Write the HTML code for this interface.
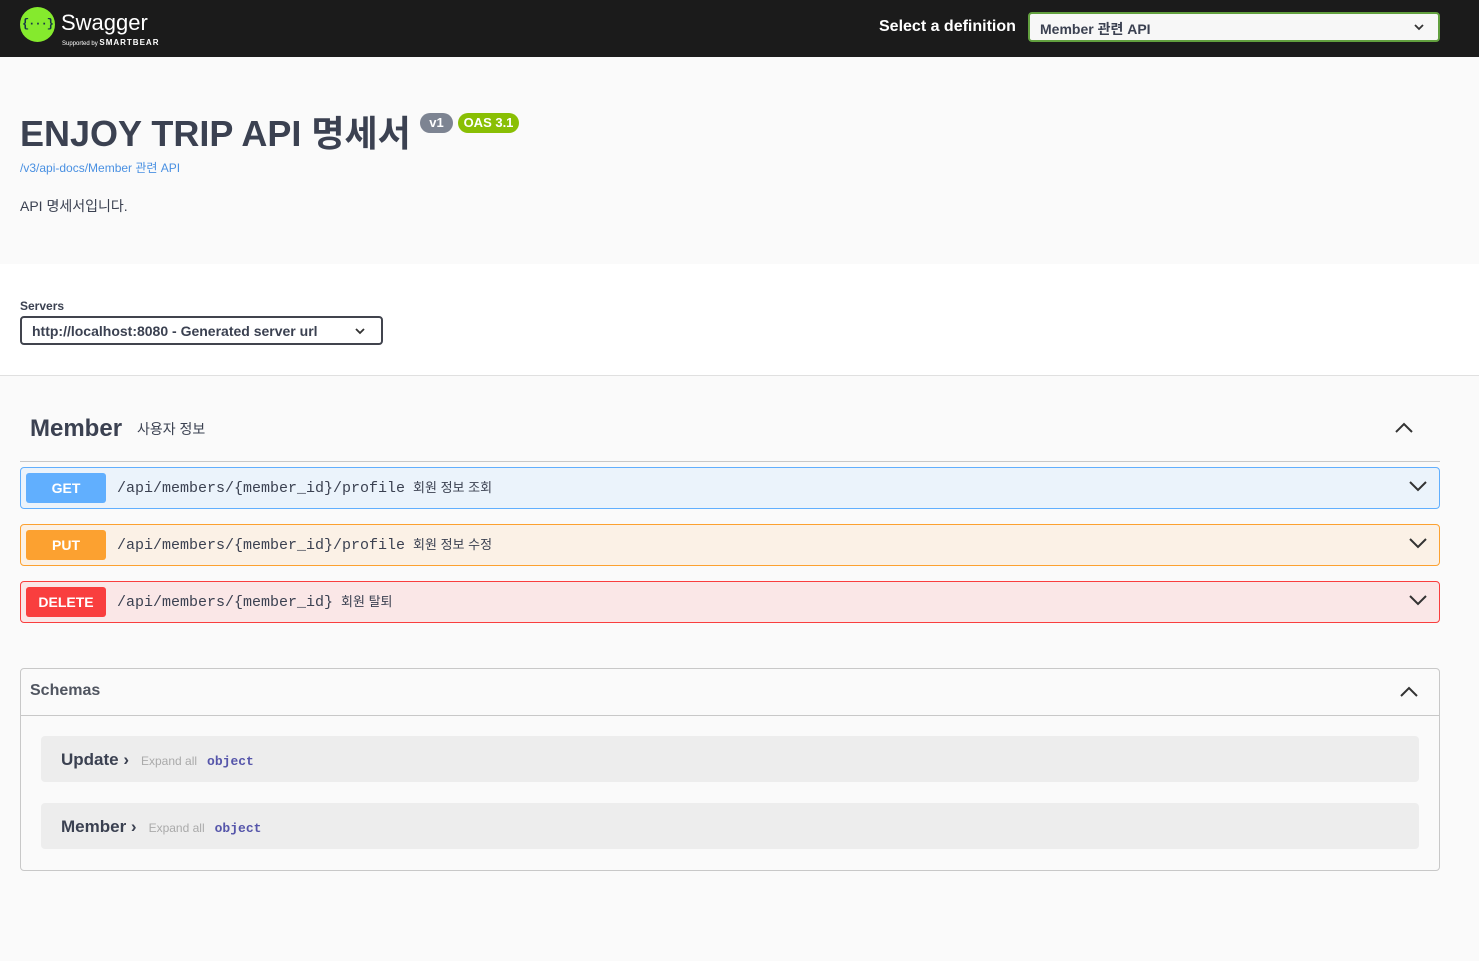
<!DOCTYPE html>
<html><head><meta charset="utf-8">
<style>
*{box-sizing:border-box;margin:0;padding:0}
body{width:1479px;height:961px;background:#fafafa;font-family:"Liberation Sans","Noto Sans CJK KR",sans-serif;color:#3b4151;position:relative;overflow:hidden}
.abs{position:absolute}
.top{left:0;top:0;width:1479px;height:57px;background:#1b1b1b}
.logo{left:20px;top:7px;width:35px;height:35px;border-radius:50%;background:#85ea2d;color:#173647;font:bold 12px "Liberation Mono",monospace;text-align:center;line-height:35px;letter-spacing:-1px}
.info{left:0;top:57px;width:1479px;height:207px;background:#fafafa}
.servers{left:0;top:264px;width:1479px;height:112px;background:#fff;border-bottom:1px solid #e0e0e0}
.op{left:20px;width:1420px;height:42px;border:1px solid;border-radius:4px}
.m{position:absolute;left:5px;top:5px;width:80px;height:30px;border-radius:3px;color:#fff;font-weight:bold;font-size:14px;text-align:center;line-height:30px}
.path{position:absolute;left:96px;top:0;line-height:40px;font-family:"Liberation Mono",monospace;font-size:15px;color:#3b4151}
.path span{font-family:"Liberation Sans","Noto Sans CJK KR",sans-serif;font-size:13px;margin-left:8px}
.chev{position:absolute;right:12px;top:12px}
.row{left:41px;width:1378px;height:46px;background:#ededed;border-radius:4px}
.row b{position:absolute;left:20px;top:14px;font-size:17px;color:#3b4151}
.row i{font-style:normal;color:#aaa;font-size:12px;font-weight:normal;margin-left:12px}
.row em{font-style:normal;color:#55a;font:bold 13px "Liberation Mono",monospace;margin-left:10px}
</style></head><body>
<div class="abs top"></div>
<div class="abs logo">{···}</div>
<div class="abs" style="left:61px;top:10px;color:#fff;font-size:22px">Swagger</div>
<div class="abs" style="left:62px;top:38px;color:#fff;font-size:6px">Supported by <b style="font-size:8px;letter-spacing:1px">SMARTBEAR</b></div>
<div class="abs" style="left:879px;top:18px;color:#fff;font-size:16px;font-weight:bold">Select a definition</div>
<div class="abs" style="left:1028px;top:12px;width:412px;height:30px;background:#f7f7f7;border:2px solid #62a03f;border-radius:4px;font-size:14px;font-weight:bold;color:#3b4151;padding:5px 10px">Member 관련 API
<svg class="abs" style="right:14px;top:9px" width="10" height="8" viewBox="0 0 10 8"><path d="M1 2l4 4 4-4" stroke="#333" stroke-width="1.8" fill="none"/></svg></div>

<div class="abs info"></div>
<div class="abs" style="left:20px;top:109px;font-size:36px;font-weight:bold;color:#3b4151;line-height:50px">ENJOY TRIP API 명세서</div>
<div class="abs" style="left:420px;top:113px;width:33px;height:20px;background:#7d8492;border-radius:10px;color:#fff;font-size:13px;font-weight:bold;text-align:center;line-height:20px">v1</div>
<div class="abs" style="left:458px;top:113px;width:61px;height:20px;background:#89bf04;border-radius:10px;color:#fff;font-size:13px;font-weight:bold;text-align:center;line-height:20px">OAS 3.1</div>
<div class="abs" style="left:20px;top:159px;font-size:12px;color:#4990e2">/v3/api-docs/Member 관련 API</div>
<div class="abs" style="left:20px;top:196px;font-size:14px;color:#3b4151">API 명세서입니다.</div>

<div class="abs servers"></div>
<div class="abs" style="left:20px;top:299px;font-size:12px;font-weight:bold">Servers</div>
<div class="abs" style="left:20px;top:316px;width:363px;height:29px;border:2px solid #41444e;border-radius:4px;background:#fff;font-size:14px;font-weight:bold;padding:5px 10px">http://localhost:8080 - Generated server url
<svg class="abs" style="right:16px;top:9px" width="10" height="8" viewBox="0 0 10 8"><path d="M1 2l4 4 4-4" stroke="#333" stroke-width="1.8" fill="none"/></svg></div>

<div class="abs" style="left:30px;top:415px;font-size:24px;font-weight:bold">Member</div>
<div class="abs" style="left:137px;top:419px;font-size:14px">사용자 정보</div>
<svg class="abs" style="left:1395px;top:421px" width="18" height="12" viewBox="0 0 18 12"><path d="M1 11l8-8 8 8" stroke="#333" stroke-width="2" fill="none"/></svg>
<div class="abs" style="left:20px;top:461px;width:1420px;height:1px;background:#c8c8c8"></div>

<div class="abs op" style="top:467px;background:#ebf3fb;border-color:#61affe"><div class="m" style="background:#61affe">GET</div><div class="path">/api/members/{member_id}/profile<span>회원 정보 조회</span></div><svg class="chev" width="18" height="12" viewBox="0 0 18 12"><path d="M1 2l8 8 8-8" stroke="#333" stroke-width="2" fill="none"/></svg></div>
<div class="abs op" style="top:524px;background:#fbf1e6;border-color:#fca130"><div class="m" style="background:#fca130">PUT</div><div class="path">/api/members/{member_id}/profile<span>회원 정보 수정</span></div><svg class="chev" width="18" height="12" viewBox="0 0 18 12"><path d="M1 2l8 8 8-8" stroke="#333" stroke-width="2" fill="none"/></svg></div>
<div class="abs op" style="top:581px;background:#fae7e7;border-color:#f93e3e"><div class="m" style="background:#f93e3e">DELETE</div><div class="path">/api/members/{member_id}<span>회원 탈퇴</span></div><svg class="chev" width="18" height="12" viewBox="0 0 18 12"><path d="M1 2l8 8 8-8" stroke="#333" stroke-width="2" fill="none"/></svg></div>

<div class="abs" style="left:20px;top:668px;width:1420px;height:203px;border:1px solid #c8c8c8;border-radius:4px"></div>
<div class="abs" style="left:20px;top:715px;width:1420px;height:1px;background:#c8c8c8"></div>
<div class="abs" style="left:30px;top:682px;font-size:16px;font-weight:bold;color:#505560">Schemas</div>
<svg class="abs" style="left:1400px;top:685px" width="18" height="12" viewBox="0 0 18 12"><path d="M1 11l8-8 8 8" stroke="#333" stroke-width="2" fill="none"/></svg>
<div class="abs row" style="top:736px"><b>Update ›<i>Expand all</i><em>object</em></b></div>
<div class="abs row" style="top:803px"><b>Member ›<i>Expand all</i><em>object</em></b></div>
</body></html>
